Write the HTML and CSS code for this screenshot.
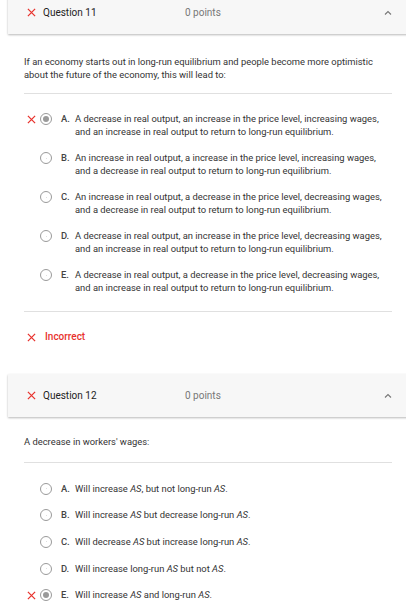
FILE: index.html
```html
<!DOCTYPE html>
<html lang="en">
<head>
<meta charset="utf-8">
<title>Quiz review</title>
<link rel="stylesheet" href="styles.css">
</head>
<body>
<main class="page">
  <section class="q">
    <header class="q-head">
      <svg class="xmark" viewBox="0 0 10 10"><path d="M1 1L9 9M9 1L1 9"/></svg>
      <span class="q-title">Question 11</span>
      <span class="q-points">0 points</span>
      <svg class="chev" viewBox="0 0 8 5"><path d="M1 4.5L4 1.5L7 4.5"/></svg>
    </header>
    <div class="q-body">
      <p class="q-text">If an economy starts out in long-run equilibrium and people become more optimistic about the future of the economy, this will lead to:</p>
      <hr class="divider">
      <ul class="opts">
        <li class="opt">
          <svg class="xmark small" viewBox="0 0 10 10"><path d="M1 1L9 9M9 1L1 9"/></svg>
          <span class="radio sel"></span>
          <span class="letter">A.</span>
          <span class="otext">A decrease in real output, an increase in the price level, increasing wages, and an increase in real output to return to long-run equilibrium.</span>
        </li>
        <li class="opt">
          <span class="nomark"></span>
          <span class="radio"></span>
          <span class="letter">B.</span>
          <span class="otext">An increase in real output, a increase in the price level, increasing wages, and a decrease in real output to return to long-run equilibrium.</span>
        </li>
        <li class="opt">
          <span class="nomark"></span>
          <span class="radio"></span>
          <span class="letter">C.</span>
          <span class="otext">An increase in real output, a decrease in the price level, decreasing wages, and a decrease in real output to return to long-run equilibrium.</span>
        </li>
        <li class="opt">
          <span class="nomark"></span>
          <span class="radio"></span>
          <span class="letter">D.</span>
          <span class="otext">A decrease in real output, an increase in the price level, decreasing wages, and an increase in real output to return to long-run equilibrium.</span>
        </li>
        <li class="opt">
          <span class="nomark"></span>
          <span class="radio"></span>
          <span class="letter">E.</span>
          <span class="otext">A decrease in real output, a decrease in the price level, decreasing wages, and an increase in real output to return to long-run equilibrium.</span>
        </li>
      </ul>
      <hr class="divider">
      <div class="result">
        <svg class="xmark" viewBox="0 0 10 10"><path d="M1 1L9 9M9 1L1 9"/></svg>
        <span>Incorrect</span>
      </div>
    </div>
  </section>

  <section class="q">
    <header class="q-head">
      <svg class="xmark" viewBox="0 0 10 10"><path d="M1 1L9 9M9 1L1 9"/></svg>
      <span class="q-title">Question 12</span>
      <span class="q-points">0 points</span>
      <svg class="chev" viewBox="0 0 8 5"><path d="M1 4.5L4 1.5L7 4.5"/></svg>
    </header>
    <div class="q-body tight">
      <p class="q-text">A decrease in workers' wages:</p>
      <hr class="divider">
      <ul class="opts">
        <li class="opt">
          <span class="nomark"></span>
          <span class="radio"></span>
          <span class="letter">A.</span>
          <span class="otext">Will increase <i>AS</i>, but not long-run <i>AS</i>.</span>
        </li>
        <li class="opt">
          <span class="nomark"></span>
          <span class="radio"></span>
          <span class="letter">B.</span>
          <span class="otext">Will increase <i>AS</i> but decrease long-run <i>AS</i>.</span>
        </li>
        <li class="opt">
          <span class="nomark"></span>
          <span class="radio"></span>
          <span class="letter">C.</span>
          <span class="otext">Will decrease <i>AS</i> but increase long-run <i>AS</i>.</span>
        </li>
        <li class="opt">
          <span class="nomark"></span>
          <span class="radio"></span>
          <span class="letter">D.</span>
          <span class="otext">Will increase long-run <i>AS</i> but not <i>AS</i>.</span>
        </li>
        <li class="opt">
          <svg class="xmark small" viewBox="0 0 10 10"><path d="M1 1L9 9M9 1L1 9"/></svg>
          <span class="radio sel"></span>
          <span class="letter">E.</span>
          <span class="otext">Will increase <i>AS</i> and long-run <i>AS</i>.</span>
        </li>
      </ul>
    </div>
  </section>
</main>
</body>
</html>
```

FILE: styles.css
```css
* { box-sizing: border-box; }

html, body {
  margin: 0;
  padding: 0;
  background: #ffffff;
}

body {
  font-family: Roboto, "Liberation Sans", Arial, sans-serif;
  color: #333333;
  overflow: hidden;
}

.page {
  margin-top: -9px;
  padding-left: 8px;
}

.q {
  width: 410px;
}

.q-head {
  display: flex;
  align-items: center;
  height: 43px;
  padding-left: 19px;
  background: #f7f7f7;
  box-shadow: 0 1px 2px rgba(0, 0, 0, 0.28);
  position: relative;
  z-index: 1;
}

.xmark {
  width: 9px;
  height: 9px;
  flex: none;
  fill: none;
  stroke: #e8322d;
  stroke-width: 1.4;
}

.q-title {
  margin-left: 7px;
  width: 142px;
  font-size: 10px;
  color: #222222;
}

.q-points {
  font-size: 10px;
  color: #777777;
}

.chev {
  width: 8px;
  height: 5px;
  margin-left: auto;
  margin-right: 26px;
  fill: none;
  stroke: #777777;
  stroke-width: 1.1;
}

.q-body {
  width: 384px;
  padding: 22px 0 0 0;
}

.q-body.tight {
  padding-top: 19px;
}

.q-text {
  margin: 0 0 0 16px;
  font-size: 9.4px;
  line-height: 12.5px;
  color: #333333;
}

.divider {
  margin: 12px 0 0 16px;
  width: 368px;
  border: none;
  border-top: 1px solid #e0e0e0;
  height: 0;
}

.tight .divider {
  margin-top: 13px;
}

.opts {
  list-style: none;
  margin: 0;
  padding: 19px 0 0 0;
  display: flex;
  flex-direction: column;
  gap: 14px;
}

.tight .opts {
  padding-top: 20px;
  gap: 14.2px;
}

.opts + .divider {
  margin-top: 17px;
}

.opt {
  display: flex;
  align-items: flex-start;
  padding-left: 19px;
  font-size: 9.4px;
  line-height: 12.5px;
}

.opt .xmark,
.opt .nomark {
  width: 9px;
  height: 9px;
  margin-top: 2px;
  flex: none;
}

.radio {
  flex: none;
  width: 12px;
  height: 12px;
  margin-left: 4px;
  border: 1px solid #9a9a9a;
  border-radius: 50%;
  display: flex;
  align-items: center;
  justify-content: center;
}

.radio::after {
  content: "";
  width: 1px;
  height: 1px;
  border-radius: 50%;
  background: #d6d6d6;
}

.radio.sel::after {
  width: 6px;
  height: 6px;
  background: #9a9a9a;
}

.letter {
  flex: none;
  width: 14px;
  margin-left: 9px;
  font-weight: 500;
  color: #444444;
}

.otext {
  flex: 1;
  color: #333333;
}

.otext i {
  font-style: italic;
}

.result {
  display: flex;
  align-items: flex-start;
  padding: 18px 0 0 19px;
  height: 62px;
}

.result .xmark {
  margin-top: 3px;
}

.result span {
  margin-left: 9px;
  font-size: 10px;
  font-weight: 500;
  line-height: 14px;
  color: #e8322d;
}
```
